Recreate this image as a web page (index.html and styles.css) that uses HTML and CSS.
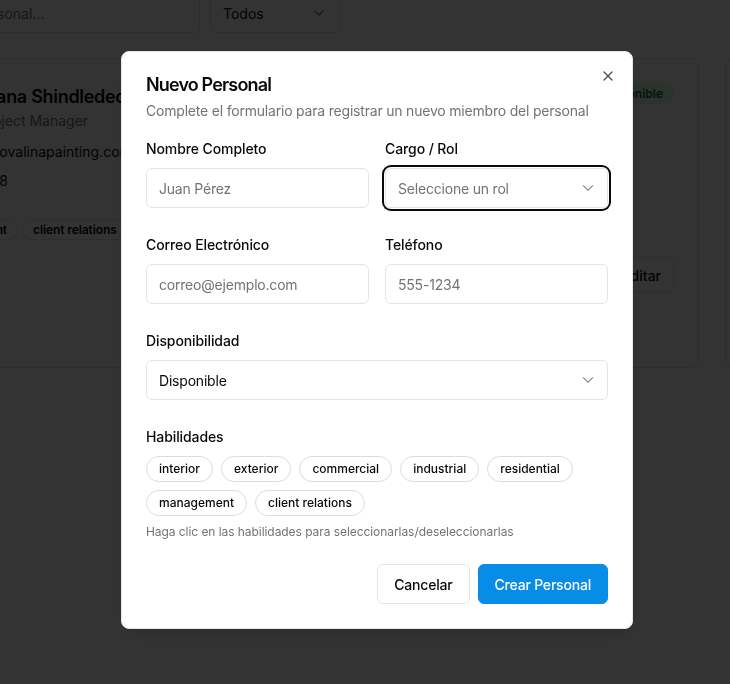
FILE: index.html
```html
<!DOCTYPE html>
<html lang="es">
<head>
<meta charset="utf-8">
<title>Nuevo Personal</title>
<link rel="stylesheet" href="styles.css">
</head>
<body>
<div class="page">
  <div class="toolbar">
    <div class="search">Buscar personal...</div>
    <div class="filter">
      <span>Todos</span>
      <svg class="chev" viewBox="0 0 24 24" width="16" height="16"><path d="m6 9 6 6 6-6"/></svg>
    </div>
  </div>
  <div class="cards">
    <div class="card">
      <div class="card-head">
        <div class="person">
          <div class="avatar">DS</div>
          <div class="who">
            <div class="name">Diana Shindledecker</div>
            <div class="role">Project Manager</div>
          </div>
        </div>
        <span class="status">Disponible</span>
      </div>
      <div class="contact">
        <div class="contact-row">
          <svg class="cicon" viewBox="0 0 24 24" width="16" height="16"><rect x="2" y="4" width="20" height="16" rx="2"/><path d="m22 7-10 5L2 7"/></svg>
          <span>dana@novalinapainting.com</span>
        </div>
        <div class="contact-row">
          <svg class="cicon" viewBox="0 0 24 24" width="16" height="16"><path d="M22 16.9v3a2 2 0 0 1-2.2 2 19.8 19.8 0 0 1-8.6-3.1 19.5 19.5 0 0 1-6-6A19.8 19.8 0 0 1 2.1 4.2 2 2 0 0 1 4.1 2h3a2 2 0 0 1 2 1.7c.1 1 .4 1.9.7 2.8a2 2 0 0 1-.5 2.1L8 9.9a16 16 0 0 0 6 6l1.3-1.3a2 2 0 0 1 2.1-.4c.9.3 1.8.6 2.8.7a2 2 0 0 1 1.7 2z"/></svg>
          <span>555-0178</span>
        </div>
      </div>
      <div class="tags">
        <span class="tag">management</span>
        <span class="tag">client relations</span>
      </div>
      <div class="card-actions">
        <span class="btn-outline-sm">Eliminar</span>
        <span class="btn-outline-sm">Editar</span>
      </div>
    </div>
    <div class="card"></div>
  </div>
</div>

<div class="overlay"></div>

<div class="dialog" role="dialog">
  <svg class="close" viewBox="0 0 24 24" width="16" height="16"><path d="M18 6 6 18"/><path d="m6 6 12 12"/></svg>
  <div class="d-title">Nuevo Personal</div>
  <div class="d-desc">Complete el formulario para registrar un nuevo miembro del personal</div>
  <div class="form">
    <div class="field">
      <div class="label">Nombre Completo</div>
      <div class="input placeholder">Juan Pérez</div>
    </div>
    <div class="field">
      <div class="label">Cargo / Rol</div>
      <div class="input select focused"><span class="placeholder">Seleccione un rol</span>
        <svg class="chev light" viewBox="0 0 24 24" width="18" height="18"><path d="m6 9 6 6 6-6"/></svg></div>
    </div>
    <div class="field">
      <div class="label">Correo Electrónico</div>
      <div class="input placeholder">correo@ejemplo.com</div>
    </div>
    <div class="field">
      <div class="label">Teléfono</div>
      <div class="input placeholder">555-1234</div>
    </div>
    <div class="field wide">
      <div class="label">Disponibilidad</div>
      <div class="input select"><span>Disponible</span>
        <svg class="chev light" viewBox="0 0 24 24" width="18" height="18"><path d="m6 9 6 6 6-6"/></svg></div>
    </div>
    <div class="field wide">
      <div class="label">Habilidades</div>
      <div class="skills">
        <span class="skill">interior</span>
        <span class="skill">exterior</span>
        <span class="skill">commercial</span>
        <span class="skill">industrial</span>
        <span class="skill">residential</span>
        <span class="skill">management</span>
        <span class="skill">client relations</span>
      </div>
      <div class="hint">Haga clic en las habilidades para seleccionarlas/deseleccionarlas</div>
    </div>
  </div>
  <div class="footer">
    <span class="btn btn-outline">Cancelar</span>
    <span class="btn btn-primary">Crear Personal</span>
  </div>
</div>
</body>
</html>
```
FILE: styles.css
```css
* { box-sizing: border-box; }
html, body { margin: 0; padding: 0; }
body {
  width: 730px;
  height: 684px;
  overflow: hidden;
  background: #fff;
  font-family: Inter, "Noto Sans", sans-serif;
  color: #0a0a0a;
  position: relative;
}

/* background page */
.page {
  margin-left: -104px;
  margin-top: -7px;
  display: flex;
  flex-direction: column;
  gap: 25px;
}
.toolbar { display: flex; gap: 10px; }
.search, .filter {
  height: 40px;
  border: 1px solid #e5e5e5;
  border-radius: 6px;
  font-size: 14px;
  display: flex;
  align-items: center;
  padding: 0 12px;
}
.search { width: 304px; color: #737373; padding-left: 28px; }
.filter { width: 130px; justify-content: space-between; }
.chev { fill: none; stroke: #0a0a0a; stroke-width: 2; stroke-linecap: round; stroke-linejoin: round; opacity: .5; flex: none; }
.chev.light { stroke-width: 1.5; opacity: .45; margin-right: -2px; }

.cards { display: grid; grid-template-columns: 803px 803px; gap: 26px; }
.card {
  height: 310px;
  border: 1px solid #e5e5e5;
  border-radius: 8px;
  padding: 24px;
  display: flex;
  flex-direction: column;
}
.card-head { display: flex; justify-content: space-between; align-items: flex-start; }
.person { display: flex; gap: 10px; align-items: center; }
.avatar {
  width: 48px; height: 48px; border-radius: 50%;
  background: #f5f5f5; display: flex; align-items: center; justify-content: center;
  font-weight: 600; font-size: 14px;
}
.name { font-size: 18px; line-height: 28px; font-weight: 600; letter-spacing: -0.3px; }
.role { font-size: 14px; line-height: 20px; color: #737373; }
.status {
  background: #dcfce7; color: #166534;
  font-size: 12px; font-weight: 600; line-height: 17px;
  padding: 2px 11px 2px 10px; border-radius: 999px;
}
.contact { margin-top: 11px; display: flex; flex-direction: column; gap: 9px; }
.contact-row { display: flex; align-items: center; gap: 8px; font-size: 14px; line-height: 20px; }
.cicon { fill: none; stroke: #737373; stroke-width: 2; stroke-linecap: round; stroke-linejoin: round; }
.tags { margin-top: 29px; display: flex; gap: 4px; }
.tag {
  font-size: 12px; font-weight: 600; line-height: 16px; letter-spacing: -0.1px;
  padding: 1px 10px; border: 1px solid #e5e5e5; border-radius: 999px;
}
.card-actions { margin-top: 17px; display: flex; justify-content: flex-end; gap: 8px; }
.btn-outline-sm {
  height: 36px; padding: 0 12px; border: 1px solid #e5e5e5; border-radius: 6px;
  font-size: 14px; font-weight: 500; display: flex; align-items: center;
}

/* overlay */
.overlay { position: fixed; inset: 0; background: rgba(0, 0, 0, 0.8); }

/* dialog */
.dialog {
  position: fixed;
  left: 121px;
  top: 51px;
  width: 512px;
  background: #fff;
  border: 1px solid #e5e5e5;
  border-radius: 8px;
  padding: 24px;
  box-shadow: 0 10px 15px -3px rgba(0,0,0,.1), 0 4px 6px -4px rgba(0,0,0,.1);
}
.close {
  position: absolute; right: 16px; top: 16px;
  fill: none; stroke: #0a0a0a; stroke-width: 2; stroke-linecap: round; stroke-linejoin: round; opacity: .7;
}
.d-title { font-size: 18px; line-height: 18px; font-weight: 600; letter-spacing: -0.85px; }
.d-desc { margin-top: 7px; font-size: 14px; line-height: 20px; color: #737373; letter-spacing: -0.2px; }

.form {
  margin-top: 18px;
  display: grid;
  grid-template-columns: 1fr 1fr;
  column-gap: 16px;
  row-gap: 27px;
}
.field.wide { grid-column: span 2; }
.label { font-size: 14px; line-height: 20px; font-weight: 500; margin-bottom: 9px; letter-spacing: -0.1px; }
.input {
  height: 40px;
  border: 1px solid #e5e5e5;
  border-radius: 6px;
  padding: 0 12px;
  font-size: 14px;
  letter-spacing: -0.2px;
  display: flex;
  align-items: center;
  background: #fff;
}
.placeholder { color: #737373; }
.select { justify-content: space-between; }
.select.focused { box-shadow: 0 0 0 1px #fff, 0 0 0 3px #0a0a0a; border-radius: 6px; }

.skills { display: flex; flex-wrap: wrap; gap: 8px; width: 440px; }
.skill {
  font-size: 12px; font-weight: 500; line-height: 16px;
  padding: 4px 12px; border: 1px solid #dcdcdc; border-radius: 999px;
}
.hint { margin-top: 8px; font-size: 12px; line-height: 16px; color: #737373; letter-spacing: -0.06px; }

.footer { margin-top: 24px; display: flex; justify-content: flex-end; gap: 8px; }
.btn {
  height: 40px; padding: 0 16px; border-radius: 6px;
  font-size: 14px; font-weight: 500; display: flex; align-items: center; letter-spacing: -0.2px;
}
.btn-outline { border: 1px solid #e5e5e5; background: #fff; }
.btn-primary { background: #078de5; color: #fff; border: 1px solid #078de5; }
```
